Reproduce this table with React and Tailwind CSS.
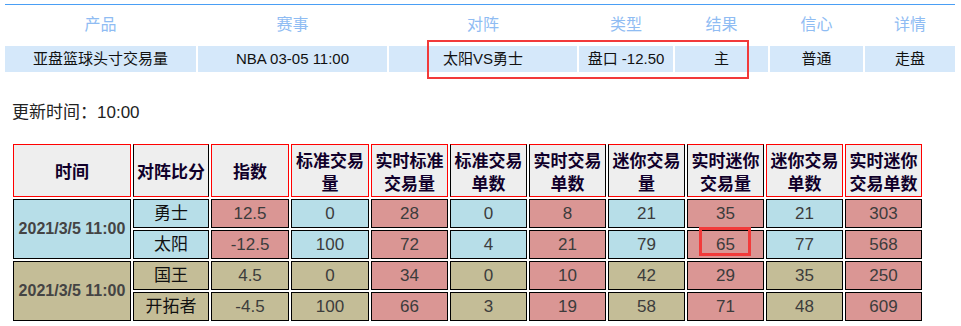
import React from "react";

const font = { fontFamily: '"Liberation Sans", "Noto Sans CJK SC", sans-serif' };

const topHeads = ["产品", "赛事", "对阵", "类型", "结果", "信心", "详情"];
const topRow = ["亚盘篮球头寸交易量", "NBA 03-05 11:00", "太阳VS勇士", "盘口 -12.50", "主", "普通", "走盘"];

// border colour of each header cell
const heads = [
  { t: ["时间"], w: "w-[118px]", red: true },
  { t: ["对阵比分"], w: "w-[76px]", red: false },
  { t: ["指数"], w: "w-[78px]", red: true },
  { t: ["标准交易", "量"], w: "w-[78px]", red: true },
  { t: ["实时标准", "交易量"], w: "w-[77px]", red: true },
  { t: ["标准交易", "单数"], w: "w-[77px]", red: false },
  { t: ["实时交易", "单数"], w: "w-[77px]", red: false },
  { t: ["迷你交易", "量"], w: "w-[77px]", red: false },
  { t: ["实时迷你", "交易量"], w: "w-[77px]", red: false },
  { t: ["迷你交易", "单数"], w: "w-[77px]", red: true },
  { t: ["实时迷你", "交易单数"], w: "w-[77px]", red: true },
];

const BLUE = "bg-[#b7dee8]";
const PINK = "bg-[#da9694]";
const TAN = "bg-[#c4bd97]";

const groups = [
  {
    time: "2021/3/5 11:00",
    bg: BLUE,
    rows: [
      ["勇士", "12.5", "0", "28", "0", "8", "21", "35", "21", "303"],
      ["太阳", "-12.5", "100", "72", "4", "21", "79", "65", "77", "568"],
    ],
    colors: [BLUE, PINK, BLUE, PINK, BLUE, PINK, BLUE, PINK, BLUE, PINK],
  },
  {
    time: "2021/3/5 11:00",
    bg: TAN,
    rows: [
      ["国王", "4.5", "0", "34", "0", "10", "42", "29", "35", "250"],
      ["开拓者", "-4.5", "100", "66", "3", "19", "58", "71", "48", "609"],
    ],
    colors: [TAN, TAN, TAN, PINK, TAN, PINK, TAN, PINK, TAN, PINK],
  },
];

export default function App() {
  return (
    <div className="relative w-[961px] h-[326px] bg-white overflow-hidden" style={font}>
      {/* top summary */}
      <div className="ml-[5px] mt-[4px] w-[950px] border-t border-[#4a9ff5]">
        <div className="grid grid-cols-[191px_189px_188px_94px_93px_93px_90px] gap-x-[2px] h-[39px] items-center text-[16px] text-[#8fbcf3]">
          {topHeads.map((h) => (
            <div key={h} className="text-center">{h}</div>
          ))}
        </div>
        <div className="mt-[2px] grid grid-cols-[191px_189px_188px_94px_93px_93px_90px] gap-x-[2px] text-[15px] text-[#111]">
          {topRow.map((c, i) => (
            <div key={i} className="h-[26px] bg-[#d5e8fa] flex items-center justify-center">{c}</div>
          ))}
        </div>
      </div>

      <div className="ml-[12px] mt-[29px] text-[17px] leading-[24px] text-[#222]">更新时间：10:00</div>

      <table className="mt-[17px] ml-[11px] table-fixed border-separate border-spacing-[2px] w-[913px]">
        <thead>
          <tr>
            {heads.map((h, i) => (
              <th
                key={i}
                className={`${h.w} h-[53px] p-0 bg-[#eeeeee] border text-[17px] leading-[23px] font-bold text-[#10002a] ${
                  h.red ? "border-[#f00]" : "border-black border-t-[#f00] border-b-[#f00]"
                }`}
                style={{ fontFamily: '"Noto Sans CJK SC", sans-serif' }}
              >
                {h.t.map((l) => (
                  <div key={l}>{l}</div>
                ))}
              </th>
            ))}
          </tr>
        </thead>
        <tbody>
          {groups.map((g, gi) =>
            g.rows.map((r, ri) => (
              <tr key={gi + "-" + ri}>
                {ri === 0 && (
                  <td
                    rowSpan={2}
                    className={`${g.bg} border border-black p-0 text-center text-[16px] font-bold text-[#444]`}
                  >
                    {g.time}
                  </td>
                )}
                {r.map((c, ci) => (
                  <td
                    key={ci}
                    className={`${g.colors[ci]} h-[29px] p-0 border border-black text-center text-[17px] ${
                      ci === 0 ? "text-[#111]" : "text-[#3c3c3c]"
                    }`}
                  >
                    {c}
                  </td>
                ))}
              </tr>
            ))
          )}
        </tbody>
      </table>

      {/* annotation boxes */}
      <div className="absolute left-[427px] top-[40px] w-[322px] h-[39px] border-2 border-[#f23a3a]" />
      <div className="absolute left-[699px] top-[227px] w-[52px] h-[29px] border-[3px] border-[#f23a3a]" />
    </div>
  );
}
